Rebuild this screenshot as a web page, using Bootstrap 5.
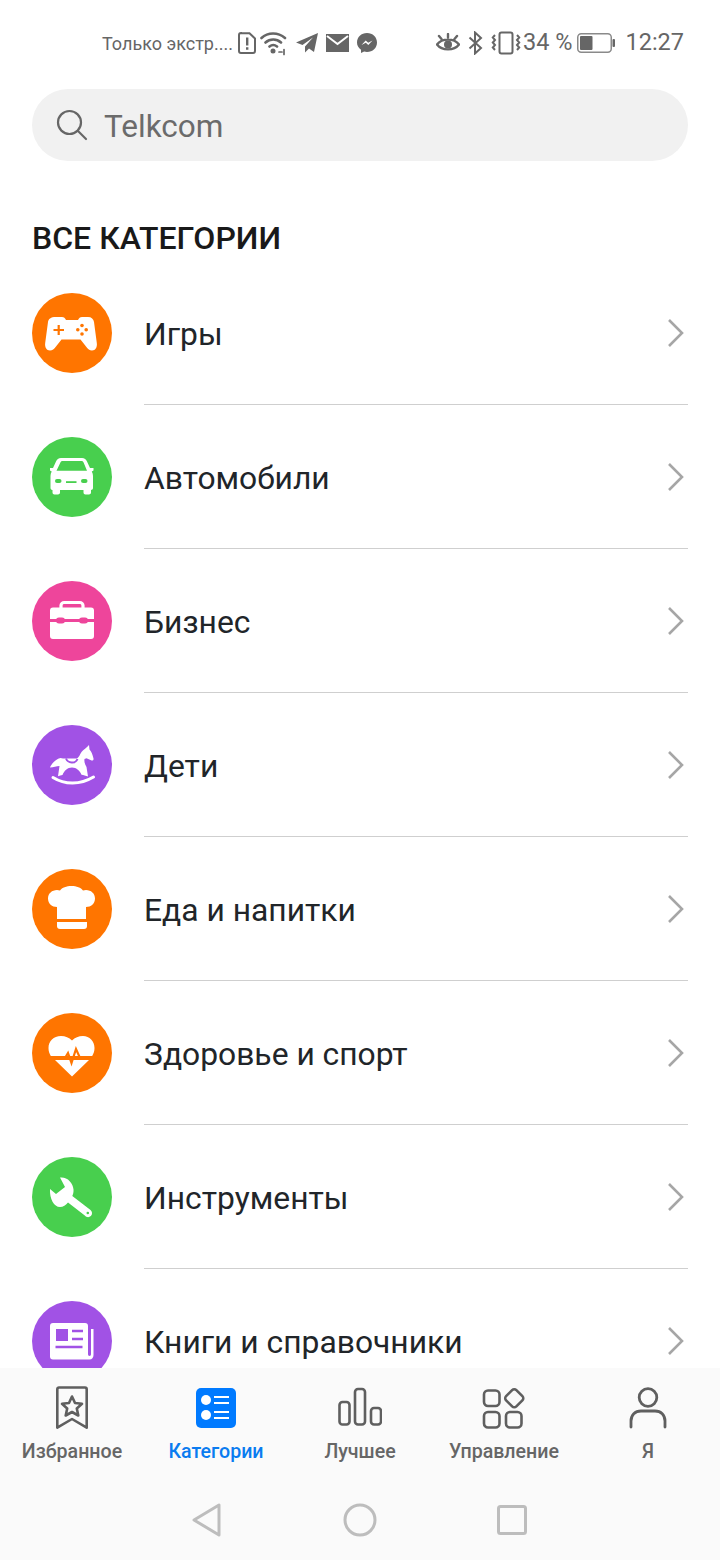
<!DOCTYPE html>
<html lang="ru">
<head>
<meta charset="UTF-8">
<meta name="viewport" content="width=device-width, initial-scale=1.0">
<title>Категории</title>
<link href="https://cdn.jsdelivr.net/npm/bootstrap@5.3.0/dist/css/bootstrap.min.css" rel="stylesheet">
<style>
    body { font-family: Roboto, "Noto Sans", sans-serif; background: #fff; color: #191919; height: 1560px; }
    svg { display: block; flex: none; }

    .status-bar { height: 64px; padding: 22px 36px 0 102px; color: #666; flex: none; }
    .status-note { font-size: 18px; width: 130px; margin-right: 6px; white-space: nowrap; }
    .status-num { font-size: 23.5px; margin: 0 5px 0 2px; }
    .status-time { font-size: 23.5px; margin-left: 10px; }

    .search-box { height: 72px; margin: 25px 32px 0; background: #f1f1f1; padding-left: 24px; flex: none; }
    .search-text { font-size: 31.5px; color: #6b6b6b; margin-left: 16px; line-height: 1; padding-top: 4px; }

    .section-title { font-size: 32px; font-weight: 500; line-height: 40px; margin: 57px 32px 3px; flex: none; }

    .cat-scroll { flex: 1 1 0; min-height: 0; overflow: hidden; }
    .cat-row { height: 144px; padding-left: 32px; background: transparent; }
    .cat-dot { width: 80px; height: 80px; border-radius: 50%; flex: none; }
    .cat-body { height: 144px; margin: 0 32px; border-bottom: 1px solid #cfcfcf; font-size: 31.8px; }
    .cat-body span { padding-top: 4px; }
    .dot-orange { background: #ff7500; }
    .dot-green { background: #48cf4e; }
    .dot-pink { background: #ee459b; }
    .dot-purple { background: #a152e5; }

    .bottom-bar { height: 192px; background: #fafafa; flex: none; }
    .tab-item { width: 144px; padding-top: 18px; color: #666; font-size: 19.6px; font-weight: 500; line-height: 24px; }
    .tab-item svg { margin-bottom: 10px; }
    .tab-active { color: #0a7cf0; }
    .sys-nav { padding-top: 38px; }
    .sys-slot { width: 152px; }
</style>
</head>
<body class="d-flex flex-column overflow-hidden">

    <!-- status bar -->
    <div class="status-bar d-flex align-items-center justify-content-between">
        <div class="d-flex align-items-center">
            <span class="status-note">Только экстр....</span>
            <svg width="18" height="22" viewBox="0 0 18 22"><path d="M3 1.200h8.500L17 6.500V19a2 2 0 0 1-2 2H3a2 2 0 0 1-2-2V3a2 2 0 0 1 2-2z" fill="none" stroke="#666" stroke-width="2"/><path d="M8 5.500h2.400v8H8zM8 15.200h2.400v2.600H8z" fill="#666"/></svg>
            <svg class="ms-1" width="28" height="26" viewBox="0 0 28 26" fill="none" stroke="#666" stroke-width="2.600" stroke-linecap="round"><path d="M1.500 8C8 2 18 2 25 8M5.500 12.500c4.500-4 11-4 15.500 0M9.500 16.500c2.500-2 5-2 7.500 0"/><circle cx="13" cy="21" r="2.500" fill="#666" stroke="none"/><path d="M19 22h3M24 19.500v5" stroke-width="1.700"/></svg>
            <svg class="ms-2" width="22" height="20" viewBox="0 0 22 20"><path d="M22 0 0 9.500l6.500 2.500L17 4.500 9 13.500v6l4-4 5 3.500z" fill="#666"/></svg>
            <svg class="ms-2" width="23" height="18" viewBox="0 0 23 18"><path d="M0 0h23v18H0z" fill="#666"/><path d="M1 2l10.500 8L22 2" fill="none" stroke="#fff" stroke-width="2"/></svg>
            <svg class="ms-2" width="20" height="20" viewBox="0 0 20 20"><path d="M10 0c5.700 0 10 4.100 10 9.500S15.700 19 10 19c-1 0-2-.1-2.900-.4L4 20v-3.300C1.500 15 0 12.500 0 9.500 0 4.100 4.300 0 10 0z" fill="#666"/><path d="M4.500 12 8.700 7.500l2.500 2.300 4.300-2.300-4.200 4.500-2.500-2.300z" fill="#fff"/></svg>
        </div>
        <div class="d-flex align-items-center">
            <svg width="24" height="20" viewBox="0 0 24 20" fill="none" stroke="#666" stroke-width="2.400" stroke-linecap="round"><path d="M1 11.500C6 5 18 5 23 11.500 18 18 6 18 1 11.500zM3 3l2.500 3M12 1v3.500M21 3l-2.500 3"/><circle cx="12" cy="11.500" r="4" fill="#666" stroke="none"/></svg>
            <svg class="ms-2" width="15" height="24" viewBox="0 0 15 24" fill="none" stroke="#666" stroke-width="2"><path d="M1.500 6.500 13 17l-6 5.500v-21L13 7 1.500 17.500"/></svg>
            <svg class="ms-2" width="30" height="24" viewBox="0 0 30 24" fill="none" stroke="#666" stroke-width="2"><rect x="8.500" y="1.500" width="13" height="21" rx="2"/><path d="M4 4 1.800 6.500 4 9 1.800 11.500 4 14l-2.200 2.500L4 19M26 4l2.200 2.500L26 9l2.200 2.500L26 14l2.200 2.500L26 19" stroke-width="2"/></svg>
            <span class="status-num">34 %</span>
            <svg width="38" height="20" viewBox="0 0 38 20"><rect x=".75" y=".75" width="33.500" height="18.500" rx="3.500" fill="none" stroke="#8a8a8a" stroke-width="1.500"/><rect x="3" y="3" width="12.500" height="14" rx="1" fill="#666"/><rect x="35.500" y="6" width="2.500" height="8" rx="1" fill="#666"/></svg>
            <span class="status-time">12:27</span>
        </div>
    </div>

    <!-- search -->
    <div class="search-box rounded-pill d-flex align-items-center">
        <svg width="32" height="32" viewBox="0 0 32 32" fill="none" stroke="#666" stroke-width="2.200" stroke-linecap="round"><circle cx="13.500" cy="13.500" r="11.500"/><path d="M22 22l8 8"/></svg>
        <span class="search-text">Telkcom</span>
    </div>

    <div class="section-title">ВСЕ КАТЕГОРИИ</div>

    <!-- categories -->
    <div class="cat-scroll">
        <div class="list-group list-group-flush">
            <div class="list-group-item cat-row d-flex align-items-center border-0 py-0 pe-0">
                <div class="cat-dot dot-orange">
                    <svg width="80" height="80" viewBox="0 0 80 80"><path d="M24 24h6c2 0 3 1 4 3h12c1-2 2-3 4-3h6c3.500 0 5.500 2 6 5l2.800 21c.6 4-1.300 7.500-4.800 7.500-2.500 0-4-1.500-6-4l-5.500-7H29.500l-5.500 7c-2 2.500-3.500 4-6 4-3.500 0-5.400-3.500-4.800-7.500L16 29c.5-3 2.500-5 8-5z" fill="#fff"/><path d="M21.500 37h10.500M26.700 32v10" stroke="#ff7500" stroke-width="2.200"/><g fill="#ff7500"><circle cx="50" cy="32.500" r="1.800"/><circle cx="50" cy="41" r="1.800"/><circle cx="45.800" cy="36.800" r="1.800"/><circle cx="54.200" cy="36.800" r="1.800"/></g></svg>
                </div>
                <div class="cat-body flex-grow-1 d-flex align-items-center justify-content-between">
                    <span>Игры</span>
                    <svg width="20" height="30" viewBox="0 0 20 30" fill="none" stroke="#a6a6a6" stroke-width="2.600"><path d="M1 2l13 13L1 28"/></svg>
                </div>
            </div>
            <div class="list-group-item cat-row d-flex align-items-center border-0 py-0 pe-0">
                <div class="cat-dot dot-green">
                    <svg width="80" height="80" viewBox="0 0 80 80"><path d="M30 21h20c2.500 0 4 1.500 5 3.500l3 6.500h3.500v2.500l-1.700 1c.8 1.500 1.200 3 1.200 4.500v12c0 1.200-.8 2-2 2v2.500c0 1.200-.8 2-2 2h-3.500c-1.200 0-2-.8-2-2V53H28v2.500c0 1.200-.8 2-2 2h-3.500c-1.200 0-2-.8-2-2V53c-1.200 0-2-.8-2-2V39c0-1.500.4-3 1.200-4.500l-1.700-1V31H21l3-6.500c1-2 2.500-3.500 5-3.500z" fill="#fff"/><path d="M30.500 24h19c1 0 1.800.7 2.200 1.700l3.300 8H24.500l3.800-8c.4-1 1.200-1.700 2.200-1.700z" fill="#48cf4e"/><rect x="23" y="42" width="6.500" height="4" rx="2" fill="#48cf4e"/><rect x="49" y="42" width="6.500" height="4" rx="2" fill="#48cf4e"/><rect x="34" y="44.200" width="10.500" height="1.800" fill="#48cf4e"/></svg>
                </div>
                <div class="cat-body flex-grow-1 d-flex align-items-center justify-content-between">
                    <span>Автомобили</span>
                    <svg width="20" height="30" viewBox="0 0 20 30" fill="none" stroke="#a6a6a6" stroke-width="2.600"><path d="M1 2l13 13L1 28"/></svg>
                </div>
            </div>
            <div class="list-group-item cat-row d-flex align-items-center border-0 py-0 pe-0">
                <div class="cat-dot dot-pink">
                    <svg width="80" height="80" viewBox="0 0 80 80"><path d="M29 28v-3.500c0-1.800 1.500-3 3.200-3h15.600c1.700 0 3.200 1.200 3.200 3V28" fill="none" stroke="#fff" stroke-width="3.200"/><path d="M21 26.500h38c2 0 3 1 3 3V38H18v-8.500c0-2 1-3 3-3zM18 41h44v14c0 2-1 3-3 3H21c-2 0-3-1-3-3z" fill="#fff"/><rect x="24" y="36.500" width="9" height="6" rx="3" fill="#ee459b"/><rect x="47" y="36.500" width="9" height="6" rx="3" fill="#ee459b"/></svg>
                </div>
                <div class="cat-body flex-grow-1 d-flex align-items-center justify-content-between">
                    <span>Бизнес</span>
                    <svg width="20" height="30" viewBox="0 0 20 30" fill="none" stroke="#a6a6a6" stroke-width="2.600"><path d="M1 2l13 13L1 28"/></svg>
                </div>
            </div>
            <div class="list-group-item cat-row d-flex align-items-center border-0 py-0 pe-0">
                <div class="cat-dot dot-purple">
                    <svg width="80" height="80" viewBox="0 0 80 80"><path d="M57 20l.5 4.500c2 2 3 5 4 9 .3 1.500-1 2.500-2.500 1.800l-4.500-2-2 .7c-.5 3 .5 5.500 2 8l1.500 9.500c-2.200-1-4.500-1.500-6.500-1.800C48 46 44.500 42.500 40 42.500s-8 3.500-9.500 7.500c-1.500.2-3 .6-4.500 1.200L27.500 41c-3 .3-6 1.500-9.500 1.500 1.500-4 6-8.500 10.500-9.500l2.500.5h14c2-1.500 3-4 4.500-6.500 2-2.500 5-4 7.500-7z" fill="#fff"/><path d="M34 33.500c2 5 9.500 5.500 11.500.5" fill="none" stroke="#a152e5" stroke-width="2"/><path d="M21 52.500c12 7.500 27 7.500 40.500-.5" fill="none" stroke="#fff" stroke-width="3" stroke-linecap="round"/></svg>
                </div>
                <div class="cat-body flex-grow-1 d-flex align-items-center justify-content-between">
                    <span>Дети</span>
                    <svg width="20" height="30" viewBox="0 0 20 30" fill="none" stroke="#a6a6a6" stroke-width="2.600"><path d="M1 2l13 13L1 28"/></svg>
                </div>
            </div>
            <div class="list-group-item cat-row d-flex align-items-center border-0 py-0 pe-0">
                <div class="cat-dot dot-orange">
                    <svg width="80" height="80" viewBox="0 0 80 80"><path d="M25 38c-5 0-9-3.500-9-8.500s4-8.500 9-8.500c1 0 2 .2 3 .5 2-2.800 6.500-4.500 11.500-4.500s9.500 1.700 11.500 4.500c1-.3 2-.5 3-.5 5 0 9 3.500 9 8.500s-4 8.500-9 8.500v12H25z" fill="#fff"/><path d="M25 53h30v4c0 2-1 3-3 3H28c-2 0-3-1-3-3z" fill="#fff"/></svg>
                </div>
                <div class="cat-body flex-grow-1 d-flex align-items-center justify-content-between">
                    <span>Еда и напитки</span>
                    <svg width="20" height="30" viewBox="0 0 20 30" fill="none" stroke="#a6a6a6" stroke-width="2.600"><path d="M1 2l13 13L1 28"/></svg>
                </div>
            </div>
            <div class="list-group-item cat-row d-flex align-items-center border-0 py-0 pe-0">
                <div class="cat-dot dot-orange">
                    <svg width="80" height="80" viewBox="0 0 80 80"><path d="M29 23c4.500 0 8 1.500 11 4.500 3-3 6.500-4.500 11-4.500 6.500 0 11.500 5 11.500 12 0 3-.8 5.500-2.300 8H18.800C17.300 40.500 16.500 38 16.500 35c0-7 5-12 12.500-12zM23 47h34L40 63.500z" fill="#fff"/><path d="M18 45h15l3-5 3.500 10 4.500-14 4 9h14" fill="none" stroke="#ff7500" stroke-width="2.200"/></svg>
                </div>
                <div class="cat-body flex-grow-1 d-flex align-items-center justify-content-between">
                    <span>Здоровье и спорт</span>
                    <svg width="20" height="30" viewBox="0 0 20 30" fill="none" stroke="#a6a6a6" stroke-width="2.600"><path d="M1 2l13 13L1 28"/></svg>
                </div>
            </div>
            <div class="list-group-item cat-row d-flex align-items-center border-0 py-0 pe-0">
                <div class="cat-dot dot-green">
                    <svg width="80" height="80" viewBox="0 0 80 80"><path d="M28 20.500c7-1 13 5 13.500 12 .2 2.500-.3 4.500-1.200 6.500L58.500 53c2 1.700 2 4.500.3 6-1.700 1.700-4.300 1.500-6-.5L36 45.500c-2 2.500-5 4.500-8 4.500-6 0-10.500-8-10-18l6 5 9-7z" fill="#fff"/><circle cx="55.800" cy="56" r="1.300" fill="#48cf4e"/></svg>
                </div>
                <div class="cat-body flex-grow-1 d-flex align-items-center justify-content-between">
                    <span>Инструменты</span>
                    <svg width="20" height="30" viewBox="0 0 20 30" fill="none" stroke="#a6a6a6" stroke-width="2.600"><path d="M1 2l13 13L1 28"/></svg>
                </div>
            </div>
            <div class="list-group-item cat-row d-flex align-items-center border-0 py-0 pe-0">
                <div class="cat-dot dot-purple">
                    <svg width="80" height="80" viewBox="0 0 80 80"><path d="M21 22h32c2 0 3 1 3 3v28c0 1 .5 2 1.500 2s1.500-1 1.500-2V28h2.500v26c0 2.500-1.500 4.500-4 4.500H21c-2 0-3-1-3-3V25c0-2 1-3 3-3z" fill="#fff"/><rect x="24" y="28" width="12" height="12" fill="#a152e5"/><path d="M40 30h11M40 38h11M23.500 46h27" stroke="#a152e5" stroke-width="2.400"/></svg>
                </div>
                <div class="cat-body flex-grow-1 d-flex align-items-center justify-content-between">
                    <span>Книги и справочники</span>
                    <svg width="20" height="30" viewBox="0 0 20 30" fill="none" stroke="#a6a6a6" stroke-width="2.600"><path d="M1 2l13 13L1 28"/></svg>
                </div>
            </div>
        </div>
    </div>

    <!-- bottom tabs -->
    <div class="bottom-bar">
        <div class="d-flex">
            <div class="tab-item d-flex flex-column align-items-center">
                <svg width="44" height="44" viewBox="0 0 44 44" fill="none" stroke="#5f5f5f" stroke-width="2.600" stroke-linejoin="round"><path d="M9 1.500h26c1 0 1.700.7 1.700 1.700v38.500L22 33 7.300 41.700V3.200c0-1 .7-1.700 1.700-1.700z"/><path d="M22 10.500l3 6.500 7 .8-5.200 4.700 1.500 7L22 26l-6.300 3.500 1.500-7-5.200-4.700 7-.8z"/></svg>
                <span>Избранное</span>
            </div>
            <div class="tab-item tab-active d-flex flex-column align-items-center">
                <svg width="44" height="44" viewBox="0 0 44 44"><rect x="2" y="2" width="40" height="40" rx="5" fill="#007aff"/><circle cx="12" cy="14" r="5" fill="#fff"/><circle cx="12" cy="29" r="5" fill="#fff"/><path d="M20 11h15M20 17h15M20 26h15M20 32h15" stroke="#fff" stroke-width="2"/></svg>
                <span>Категории</span>
            </div>
            <div class="tab-item d-flex flex-column align-items-center">
                <svg width="44" height="44" viewBox="0 0 44 44" fill="none" stroke="#5f5f5f" stroke-width="2.600"><rect x="1.500" y="16" width="10" height="22.500" rx="3"/><rect x="17" y="3" width="10" height="35.500" rx="3"/><rect x="33" y="22" width="10" height="16.500" rx="3"/></svg>
                <span>Лучшее</span>
            </div>
            <div class="tab-item d-flex flex-column align-items-center">
                <svg width="44" height="44" viewBox="0 0 44 44" fill="none" stroke="#5f5f5f" stroke-width="2.600"><rect x="2" y="4.500" width="15.500" height="15.500" rx="4"/><rect x="2" y="26" width="15.500" height="15.500" rx="4"/><rect x="24" y="26" width="15.500" height="15.500" rx="4"/><rect x="25" y="5" width="14.500" height="14.500" rx="3" transform="rotate(45 32.250 12.250)"/></svg>
                <span>Управление</span>
            </div>
            <div class="tab-item d-flex flex-column align-items-center">
                <svg width="44" height="44" viewBox="0 0 44 44" fill="none" stroke="#5f5f5f" stroke-width="2.800" stroke-linecap="round"><circle cx="22" cy="11.500" r="8.800"/><path d="M5 41v-6c0-6 4-10 10-10h14c6 0 10 4 10 10v6"/></svg>
                <span>Я</span>
            </div>
        </div>
        <div class="sys-nav d-flex justify-content-center">
            <div class="sys-slot d-flex justify-content-center">
                <svg width="32" height="36" viewBox="0 0 32 36" fill="none" stroke="#bdbdbd" stroke-width="3" stroke-linejoin="round"><path d="M27 3v30L2 18z"/></svg>
            </div>
            <div class="sys-slot d-flex justify-content-center">
                <svg width="34" height="36" viewBox="0 0 34 36" fill="none" stroke="#bdbdbd" stroke-width="3"><circle cx="17" cy="18" r="15"/></svg>
            </div>
            <div class="sys-slot d-flex justify-content-center">
                <svg width="32" height="36" viewBox="0 0 32 36" fill="none" stroke="#bdbdbd" stroke-width="3" stroke-linejoin="round"><rect x="2.500" y="4.500" width="27" height="27" rx="2"/></svg>
            </div>
        </div>
    </div>

</body>
</html>
